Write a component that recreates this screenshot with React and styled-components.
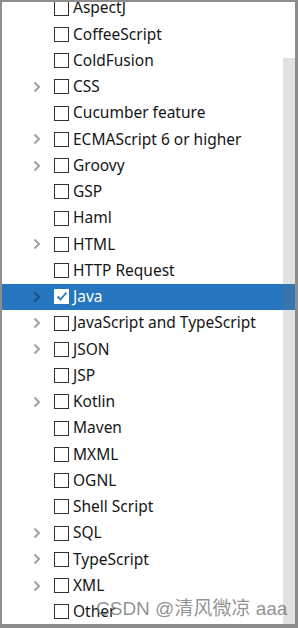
import React from "react";
import styled, { createGlobalStyle } from "styled-components";

const Global = createGlobalStyle`
  html, body {
    margin: 0;
    padding: 0;
    background: #fff;
  }
`;

const Frame = styled.div`
  position: relative;
  width: 298px;
  height: 628px;
  box-sizing: border-box;
  border-style: solid;
  border-color: #8e8e8e;
  border-width: 2px 3px 4px 2px;
  background: #fff;
  overflow: hidden;
  font-family: "Noto Sans", "Noto Sans CJK SC", sans-serif;
`;

const List = styled.div`
  display: flex;
  flex-direction: column;
  margin-top: -7px;
`;

const Row = styled.div`
  display: flex;
  align-items: center;
  height: 26.26px;
  flex-shrink: 0;
  padding-left: 31px;
  background: ${(p) => (p.$selected ? "#2675bf" : "transparent")};
  color: ${(p) => (p.$selected ? "#fff" : "#161616")};
  font-size: 15.5px;
`;

const Arrow = styled.span`
  display: flex;
  width: 21px;
  height: 12px;
  align-items: center;
  svg {
    display: block;
  }
`;

const Box = styled.span`
  display: flex;
  align-items: center;
  justify-content: center;
  width: 15px;
  height: 15px;
  box-sizing: border-box;
  border: 1.5px solid ${(p) => (p.$checked ? "#fff" : "#333")};
  background: #fff;
  margin-right: 4px;
`;

const Label = styled.span`
  white-space: nowrap;
  line-height: 1;
`;

const Scrollbar = styled.div`
  position: absolute;
  right: 0;
  top: 56px;
  bottom: 0;
  width: 12px;
  background: rgba(120, 120, 120, 0.22);
`;

const Watermark = styled.div`
  position: absolute;
  left: 94px;
  bottom: 4px;
  font-size: 19px;
  color: rgba(110, 110, 110, 0.75);
  white-space: nowrap;
  font-family: "Liberation Sans", "Noto Sans CJK SC", sans-serif;
`;

const items = [
  ["AspectJ", false],
  ["CoffeeScript", false],
  ["ColdFusion", false],
  ["CSS", true],
  ["Cucumber feature", false],
  ["ECMAScript 6 or higher", true],
  ["Groovy", true],
  ["GSP", false],
  ["Haml", false],
  ["HTML", true],
  ["HTTP Request", false],
  ["Java", true, true],
  ["JavaScript and TypeScript", true],
  ["JSON", true],
  ["JSP", false],
  ["Kotlin", true],
  ["Maven", false],
  ["MXML", false],
  ["OGNL", false],
  ["Shell Script", false],
  ["SQL", true],
  ["TypeScript", true],
  ["XML", true],
  ["Other", false],
];

const Chevron = ({ color }) => (
  <svg width="8" height="12" viewBox="0 0 8 12">
    <path d="M1.5 1.5 L6 6 L1.5 10.5" fill="none" stroke={color} strokeWidth="2" />
  </svg>
);

const Check = () => (
  <svg width="12" height="11" viewBox="0 0 12 11">
    <path d="M1.5 5.5 L4.5 8.5 L10.5 1.5" fill="none" stroke="#2675bf" strokeWidth="1.8" />
  </svg>
);

const App = () => (
  <>
    <Global />
    <Frame>
      <List>
        {items.map(([name, expandable, selected]) => (
          <Row key={name} $selected={selected}>
            <Arrow>{expandable && <Chevron color={selected ? "#1c4f80" : "#a0a0a0"} />}</Arrow>
            <Box $checked={selected}>{selected && <Check />}</Box>
            <Label>{name}</Label>
          </Row>
        ))}
      </List>
      <Scrollbar />
      <Watermark>CSDN @清风微凉 aaa</Watermark>
    </Frame>
  </>
);

export default App;
